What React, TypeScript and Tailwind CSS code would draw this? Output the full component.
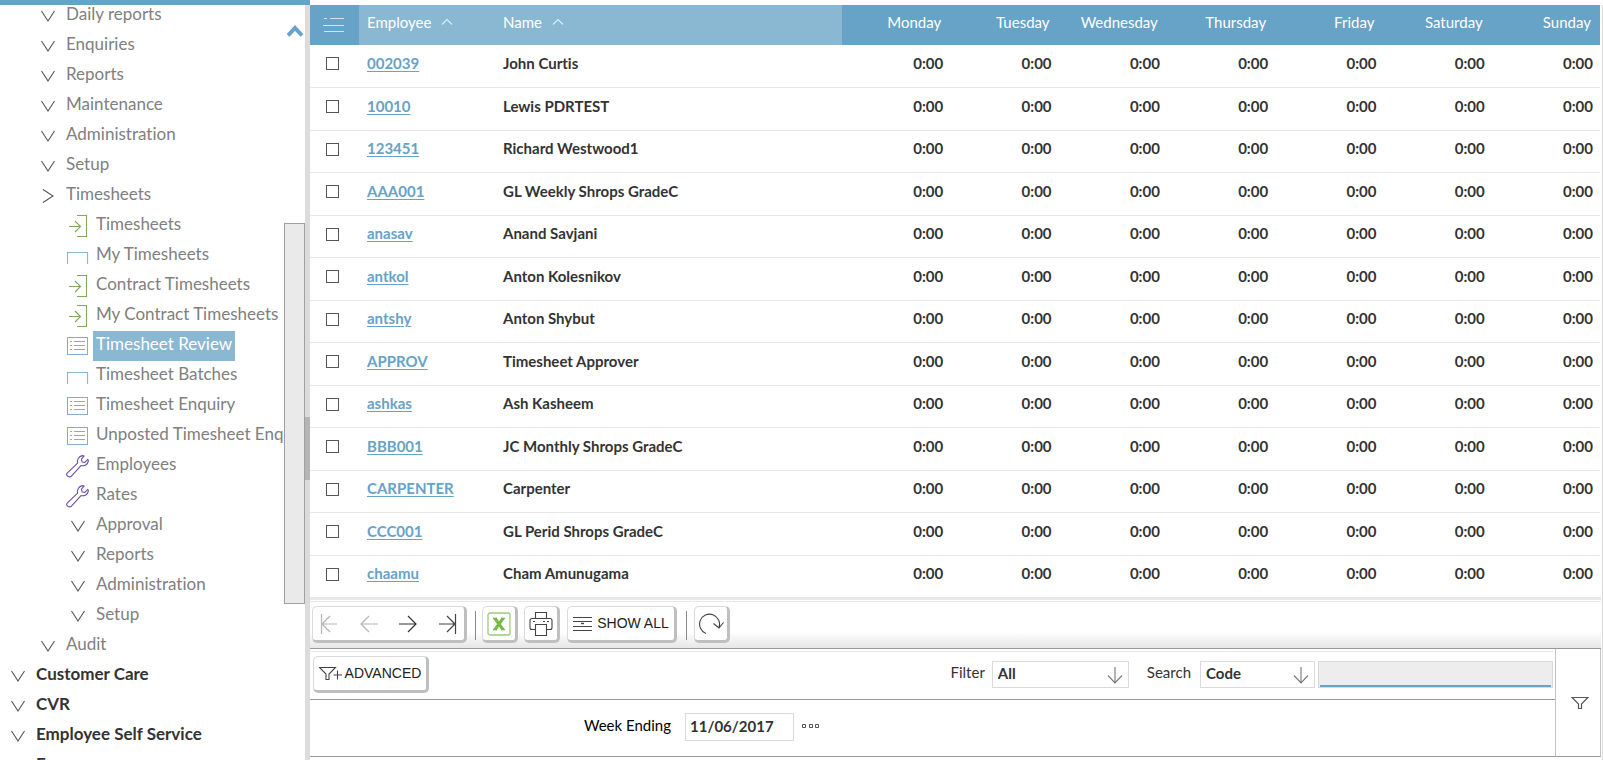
import { useState } from "react";
import type { ReactNode } from "react";

type IconKind = "down" | "right" | "entry" | "frame" | "list" | "wrench";

interface NavItem {
  level: 0 | 1 | 2;
  icon: IconKind;
  label: string;
}

const NAV: NavItem[] = [
  { level: 1, icon: "down", label: "Daily reports" },
  { level: 1, icon: "down", label: "Enquiries" },
  { level: 1, icon: "down", label: "Reports" },
  { level: 1, icon: "down", label: "Maintenance" },
  { level: 1, icon: "down", label: "Administration" },
  { level: 1, icon: "down", label: "Setup" },
  { level: 1, icon: "right", label: "Timesheets" },
  { level: 2, icon: "entry", label: "Timesheets" },
  { level: 2, icon: "frame", label: "My Timesheets" },
  { level: 2, icon: "entry", label: "Contract Timesheets" },
  { level: 2, icon: "entry", label: "My Contract Timesheets" },
  { level: 2, icon: "list", label: "Timesheet Review" },
  { level: 2, icon: "frame", label: "Timesheet Batches" },
  { level: 2, icon: "list", label: "Timesheet Enquiry" },
  { level: 2, icon: "list", label: "Unposted Timesheet Enquiry" },
  { level: 2, icon: "wrench", label: "Employees" },
  { level: 2, icon: "wrench", label: "Rates" },
  { level: 2, icon: "down", label: "Approval" },
  { level: 2, icon: "down", label: "Reports" },
  { level: 2, icon: "down", label: "Administration" },
  { level: 2, icon: "down", label: "Setup" },
  { level: 1, icon: "down", label: "Audit" },
  { level: 0, icon: "down", label: "Customer Care" },
  { level: 0, icon: "down", label: "CVR" },
  { level: 0, icon: "down", label: "Employee Self Service" },
  { level: 0, icon: "down", label: "Expenses" },
];

const INDENT = ["pl-[6px]", "pl-[36px]", "pl-[66px]"];

const DAYS = ["Monday", "Tuesday", "Wednesday", "Thursday", "Friday", "Saturday", "Sunday"];

const EMPLOYEES: [string, string][] = [
  ["002039", "John Curtis"],
  ["10010", "Lewis PDRTEST"],
  ["123451", "Richard Westwood1"],
  ["AAA001", "GL Weekly Shrops GradeC"],
  ["anasav", "Anand Savjani"],
  ["antkol", "Anton Kolesnikov"],
  ["antshy", "Anton Shybut"],
  ["APPROV", "Timesheet Approver"],
  ["ashkas", "Ash Kasheem"],
  ["BBB001", "JC Monthly Shrops GradeC"],
  ["CARPENTER", "Carpenter"],
  ["CCC001", "GL Perid Shrops GradeC"],
  ["chaamu", "Cham Amunugama"],
];

function NavIcon({ kind }: { kind: IconKind }) {
  return (
    <svg width="24" height="24" viewBox="0 0 24 24" fill="none" className="shrink-0">
      {kind === "down" && <path d="M5.5 7 12 17 18.5 7" stroke="#555" strokeWidth="1.1" />}
      {kind === "right" && <path d="M7 5.5 17 12 7 18.5" stroke="#555" strokeWidth="1.1" />}
      {kind === "entry" && (
        <g stroke="#7fa85c" strokeWidth="1.1">
          <path d="M11 1.5H20.5V22.5H11" />
          <path d="M3 12.5H14M9 7 14.5 12.5 9 18" />
        </g>
      )}
      {kind === "frame" && <path d="M1.5 20V8.5H21.5V20" stroke="#8fb9d2" strokeWidth="1.2" />}
      {kind === "list" && (
        <g stroke="#86aad6" strokeWidth="1">
          <rect x="1.5" y="3.5" width="20" height="17" />
          <path d="M4 7.5H6M8 7.5H19M4 11.5H6M8 11.5H19M4 15.5H6M8 15.5H19" />
        </g>
      )}
      {kind === "wrench" && (
        <path
          d="M1.4 18.8 11.6 9.2C10.8 6 12.6 2.4 16.4 1.6L18.2 2 15.4 5.2 16.2 8 18.8 8.4 21.8 5.4 22.4 6.8C21.8 10.6 18.4 12.4 15 11.6L5.4 22.2C3.6 23.6 0.6 22.4 0.6 20.6 0.6 19.8 0.8 19.4 1.4 18.8Z"
          stroke="#6a4fb0"
          strokeWidth="1.1"
          strokeLinejoin="round"
        />
      )}
    </svg>
  );
}

function SortMark() {
  return (
    <svg width="12" height="8" viewBox="0 0 12 8" fill="none" className="shrink-0">
      <path d="M1 6.5 6 1.5 11 6.5" stroke="#e4eff5" strokeWidth="1.1" />
    </svg>
  );
}

function ToolButton({ label, className, children }: { label: string; className: string; children: ReactNode }) {
  return (
    <button
      type="button"
      aria-label={label}
      className={`flex h-[37px] items-center justify-center rounded-[5px] border border-r-[3px] border-b-[3px] border-[#dadada] border-r-[#bfbfbf] border-b-[#bfbfbf] bg-white font-['Liberation_Sans',sans-serif] text-[14px] whitespace-nowrap text-[#222] ${className}`}
    >
      {children}
    </button>
  );
}

function PickList({ id, options, className }: { id: string; options: string[]; className: string }) {
  return (
    <div className={`relative ${className}`}>
      <select
        id={id}
        className="block h-[27px] w-full appearance-none border border-[#dadada] bg-white pb-[3px] pl-[5px] text-[15px] leading-[20px] font-bold text-[#333]"
      >
        {options.map((o) => (
          <option key={o}>{o}</option>
        ))}
      </select>
      <svg
        width="16"
        height="18"
        viewBox="0 0 16 18"
        fill="none"
        stroke="#777"
        strokeWidth="1.1"
        className="pointer-events-none absolute top-[5px] right-[6px]"
      >
        <path d="M8 1V17M1 9.5 8 17 15 9.5" />
      </svg>
    </div>
  );
}

function Sidebar() {
  const [selected, setSelected] = useState(11);
  return (
    <aside className="flex h-full w-[310px] shrink-0 flex-col">
      <div className="z-10 h-[5px] shrink-0 bg-[#67a2c7]" />
      <div className="flex min-h-0 flex-1">
        <nav className="min-w-0 flex-1 overflow-hidden">
          <ul className="-mt-1">
            {NAV.map((item, i) => (
              <li key={i} className={`flex h-[30px] items-start ${INDENT[item.level]}`}>
                <span className="pt-[3px]">
                  <NavIcon kind={item.icon} />
                </span>
                <a
                  href="#"
                  onClick={() => setSelected(i)}
                  className={`ml-[3px] h-[30px] pr-[3px] pl-[3px] text-[17px] leading-[26px] whitespace-nowrap ${
                    i === selected
                      ? "bg-[#8ab7d2] text-white"
                      : item.level === 0
                        ? "font-bold text-[#333]"
                        : "text-[#808080]"
                  }`}
                >
                  {item.label}
                </a>
              </li>
            ))}
          </ul>
        </nav>
        <div className="flex w-[21px] shrink-0 flex-col items-end pt-[19px]">
          <svg width="18" height="14" viewBox="0 0 18 14" fill="none" className="shrink-0">
            <path d="M1 11.5 8 4 15 11.5" stroke="#67a2c7" strokeWidth="4" />
          </svg>
          <div className="mt-[185px] h-[381px] w-full border border-[#a0a0a0] bg-[#eaeaea]" />
        </div>
        <div className="w-[5px] shrink-0 bg-[#dcdcdc] pt-[412px]">
          <div className="h-[63px] bg-[#b5b5b5]" />
        </div>
      </div>
    </aside>
  );
}

function TimesheetTable() {
  return (
    <table className="w-full table-fixed border-collapse text-[15px] leading-[20px]">
      <thead>
        <tr className="h-[40px] bg-[#67a2c7] text-white">
          <th className="w-[49px] p-0">
            <button type="button" aria-label="Row options" className="block pl-[13px]">
              <svg width="22" height="16" viewBox="0 0 22 16" fill="none" stroke="#d3e4ef" strokeWidth="1">
                <path d="M1 1.5H4M7 1.5H21M0 8.5H21M1 14.5H21" />
              </svg>
            </button>
          </th>
          <th className="w-[136px] bg-[#8ab7d2] px-2 pb-1.5 text-left font-normal">
            <span className="flex items-center gap-[10px]">
              Employee <SortMark />
            </span>
          </th>
          <th className="w-[347px] bg-[#8ab7d2] px-2 pb-1.5 text-left font-normal">
            <span className="flex items-center gap-[10px]">
              Name <SortMark />
            </span>
          </th>
          {DAYS.map((d) => (
            <th key={d} className="pr-[9px] pb-1.5 text-right font-normal">
              {d}
            </th>
          ))}
        </tr>
      </thead>
      <tbody>
        {EMPLOYEES.map(([code, name]) => (
          <tr key={code} className="border-b border-[#e6e6e6] font-bold text-[#333] odd:h-[42px] even:h-[43px]">
            <td className="p-0 pb-1 pl-4">
              <input
                type="checkbox"
                aria-label={`Select ${name}`}
                className="block size-[13px] appearance-none border border-[#555] bg-white checked:bg-[#67a2c7]"
              />
            </td>
            <td className="px-2 pb-1.5">
              <a href="#" className="text-[#67a2c7] underline underline-offset-2">
                {code}
              </a>
            </td>
            <td className="px-2 pb-1.5">{name}</td>
            {DAYS.map((d) => (
              <td key={d} className="pr-[7px] pb-1.5 text-right">
                0:00
              </td>
            ))}
          </tr>
        ))}
      </tbody>
    </table>
  );
}

function Toolbar() {
  return (
    <div className="border-t-[3px] border-b border-t-[#e8e8e8] border-b-[#999] bg-white">
      <div className="mt-px flex h-[47px] items-start border-t border-[#e8e8e8] bg-linear-to-b from-white from-65% to-[#e6e6e6] pt-[4px] pl-[2px]">
        <div className="flex h-[37px] w-[155px] items-center justify-between rounded-[5px] border border-r-[3px] border-b-[3px] border-[#dadada] border-r-[#bfbfbf] border-b-[#bfbfbf] bg-white px-[7px]">
          <button type="button" aria-label="First page">
            <svg width="18" height="22" viewBox="0 0 18 22" fill="none" stroke="#b5b5b5" strokeWidth="1.2">
              <path d="M1.5 1V21M2 11H17M10 3 2 11 10 19" />
            </svg>
          </button>
          <button type="button" aria-label="Previous page">
            <svg width="18" height="22" viewBox="0 0 18 22" fill="none" stroke="#b5b5b5" strokeWidth="1.2">
              <path d="M1 11H18M9 3 1 11 9 19" />
            </svg>
          </button>
          <button type="button" aria-label="Next page">
            <svg width="18" height="22" viewBox="0 0 18 22" fill="none" stroke="#333" strokeWidth="1.2">
              <path d="M0 11H17M9 3 17 11 9 19" />
            </svg>
          </button>
          <button type="button" aria-label="Last page">
            <svg width="18" height="22" viewBox="0 0 18 22" fill="none" stroke="#444" strokeWidth="1.2">
              <path d="M16.5 1V21M0 11H16M8 3 16 11 8 19" />
            </svg>
          </button>
        </div>
        <div className="mt-[5px] ml-[8px] h-[29px] w-px bg-[#888]" />
        <ToolButton label="Export to Excel" className="ml-[6px] w-[36px]">
          <svg width="24" height="24" viewBox="0 0 24 24" fill="none">
            <rect x="1" y="1" width="22" height="22" rx="2" stroke="#9ccb7c" strokeWidth="1.3" />
            <path d="M8 6.5 16 17.5M16 6.5 8 17.5" stroke="#76b947" strokeWidth="3" />
            <path d="M6 6.5H10M14 6.5H18M6 17.5H10M14 17.5H18" stroke="#76b947" strokeWidth="1.4" />
          </svg>
        </ToolButton>
        <ToolButton label="Print" className="ml-[6px] w-[36px]">
          <svg width="24" height="24" viewBox="0 0 24 24" fill="none" stroke="#444" strokeWidth="1.1">
            <path d="M6.5 6.5V0.5H17.5V6.5" />
            <path d="M6.5 17.5H3A2 2 0 0 1 1 15.5V8.5A2 2 0 0 1 3 6.5H21A2 2 0 0 1 23 8.5V15.5A2 2 0 0 1 21 17.5H17.5" />
            <path d="M6.5 12.5H17.5V23.5H6.5ZM4 9.5H6M14 9.5H16M18 9.5H20" />
          </svg>
        </ToolButton>
        <ToolButton label="Show all" className="ml-[7px] w-[110px] gap-[5px]">
          <svg width="19" height="16" viewBox="0 0 19 16" fill="none" stroke="#444" strokeWidth="1">
            <path d="M0 1.5H19M0 5.5H19M0 10.5H19M0 14.5H19" />
            <path d="M8 7.5H11" strokeWidth="1.4" />
          </svg>
          SHOW ALL
        </ToolButton>
        <div className="mt-[5px] ml-[9px] h-[29px] w-px bg-[#888]" />
        <ToolButton label="Refresh" className="ml-[7px] w-[36px]">
          <svg width="26" height="22" viewBox="0 0 26 22" fill="none" stroke="#444" strokeWidth="1.1">
            <path d="M8 20.5A10 10 0 1 1 21 14.5M15.5 10.5 21 15 25.5 9.5" />
          </svg>
        </ToolButton>
      </div>
    </div>
  );
}

function FilterPanel() {
  return (
    <div className="mb-[3px] flex">
      <div className="min-w-0 flex-1">
        <div className="flex h-[51px] items-start border-b border-[#999]">
          <div className="mt-[2px] mr-[2px] flex flex-1 items-start border-t border-[#e8e8e8] pt-[4px] pl-[3px]">
            <ToolButton label="Advanced" className="w-[116px] gap-[3px]">
              <svg width="23" height="15" viewBox="0 0 23 15" fill="none" stroke="#444" strokeWidth="1.1">
                <path d="M0.5 1.5H16.5L10 8V13.5H7V8Z" />
                <path d="M14.5 9H23M18.5 4.5V13.5" />
              </svg>
              ADVANCED
            </ToolButton>
            <div className="ml-auto flex items-start pt-[5px] text-[15px] leading-[20px] text-[#333]">
              <label htmlFor="filter" className="mr-[7px] pt-px">
                Filter
              </label>
              <PickList id="filter" options={["All"]} className="w-[137px]" />
              <label htmlFor="search-by" className="mr-[9px] ml-[18px] pt-px">
                Search
              </label>
              <PickList id="search-by" options={["Code", "Name"]} className="w-[115px]" />
              <div className="ml-[3px] h-[27px] w-[235px] border border-[#dadada] bg-[#ededed] px-px">
                <input
                  type="text"
                  aria-label="Search text"
                  className="block h-[25px] w-full border-b-2 border-[#67a2c7] bg-transparent px-1 outline-none"
                />
              </div>
            </div>
          </div>
        </div>
        <div className="flex h-[57px] items-start border-b border-[#999] pt-[13px] pl-[274px] text-[15px] leading-[20px]">
          <label htmlFor="week-ending" className="mr-[13px] w-[88px] pt-[2px] whitespace-nowrap text-black">
            Week Ending
          </label>
          <input
            id="week-ending"
            type="text"
            defaultValue="11/06/2017"
            className="h-[28px] w-[109px] border border-[#dadada] pb-[3px] pl-[4px] font-bold text-[#333] outline-none"
          />
          <button type="button" aria-label="Choose date" className="ml-[8px] pt-[11px]">
            <svg width="18" height="5" viewBox="0 0 18 5" fill="none" stroke="#555" strokeWidth="1" className="block">
              <path d="M0.5 0.5h3v3h-3zM7.5 0.5h3v3h-3zM13.5 0.5h3v3h-3z" />
            </svg>
          </button>
        </div>
      </div>
      <button
        type="button"
        aria-label="Toggle filter"
        className="flex w-[46px] shrink-0 items-center justify-center border border-t-0 border-[#c4c4c4] border-b-[#999] pl-[3px]"
      >
        <svg width="18" height="14" viewBox="0 0 18 14" fill="none" stroke="#555" strokeWidth="1.2">
          <path d="M1 1.5H17L10.5 8V12.5H7.5V8Z" />
        </svg>
      </button>
    </div>
  );
}

export default function App() {
  return (
    <div className="flex h-screen overflow-hidden bg-white font-[Lato,sans-serif] [font-variant-ligatures:no-common-ligatures]">
      <Sidebar />
      <main className="mt-[5px] flex min-w-0 flex-1 flex-col border-r border-[#dcdcdc] pr-px">
        <div className="min-h-0 flex-1 overflow-hidden pr-px">
          <TimesheetTable />
        </div>
        <Toolbar />
        <FilterPanel />
      </main>
    </div>
  );
}
